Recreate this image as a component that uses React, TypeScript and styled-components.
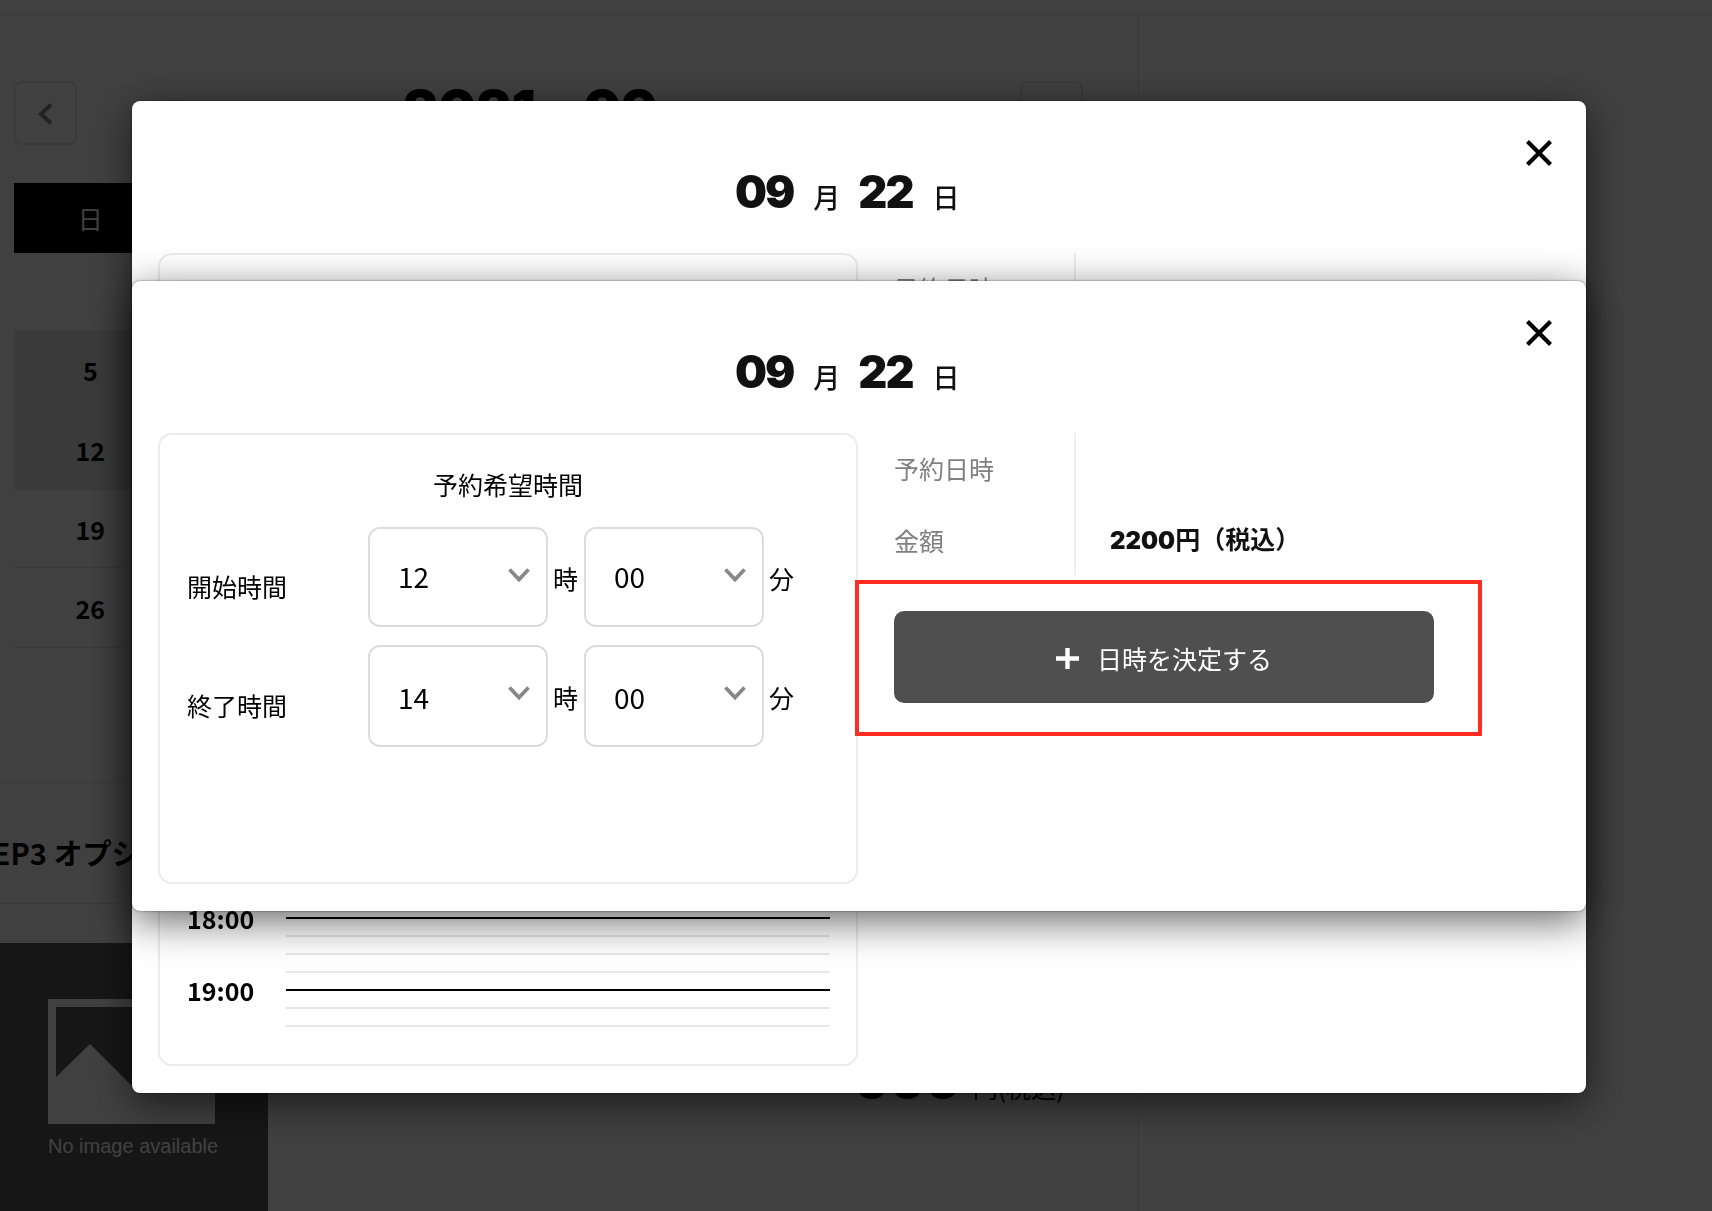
import styled, { createGlobalStyle } from "styled-components";

const JP = `"Noto Sans CJK JP", "Noto Sans", sans-serif`;
const HEAVY = `Inter, "Noto Sans CJK JP", sans-serif`;

const HOURS = [10, 11, 12, 13, 14, 15, 16, 17, 18, 19];
const WEEK_ROWS = [
  { day: 5, shaded: true, height: 80 },
  { day: 12, shaded: true, height: 80 },
  { day: 19, shaded: false, height: 78 },
  { day: 26, shaded: false, height: 80 },
];

export default function App() {
  return (
    <>
      <GlobalStyle />
      <Page>
        <TopBar />
        <Main>
          <MonthNav>
            <NavButton>
              <svg width="16" height="22" viewBox="0 0 16 22" fill="none" stroke="#888" strokeWidth="4">
                <polyline points="13,1.5 3,11 13,20.5" />
              </svg>
            </NavButton>
            <MonthTitle>2021 - 09</MonthTitle>
            <NavButton />
          </MonthNav>

          <WeekHeader>
            <WeekHeaderCell>日</WeekHeaderCell>
          </WeekHeader>

          <Calendar>
            {WEEK_ROWS.map((row) => (
              <WeekRow key={row.day} $height={row.height}>
                <DayCell $shaded={row.shaded}>{row.day}</DayCell>
              </WeekRow>
            ))}
          </Calendar>

          <StepRow>STEP3 オプション</StepRow>

          <PlanRow>
            <PlanThumb>
              <svg width="167" height="125" viewBox="0 0 167 125">
                <path
                  fill="#fff"
                  fillRule="evenodd"
                  d="M0 0H167V125H0ZM8 8V78L42 45L92 95L159 60V8Z"
                />
              </svg>
              <NoImage>No image available</NoImage>
            </PlanThumb>
            <PlanPrice>
              <b>000</b>円(税込)
            </PlanPrice>
          </PlanRow>
        </Main>
      </Page>

      <Overlay>
        <Modal $top={101} $height={992}>
          <CloseIcon />
          <DateTitle />
          <ModalBody>
            <Card $height={813}>
              <Timeline>
                {HOURS.map((hour) => (
                  <HourBlock key={hour}>
                    <HourLabel>{hour}:00</HourLabel>
                    <HourLines>
                      <HourLine $strong />
                      <HourLine />
                      <HourLine />
                      {hour !== 19 && <HourLine />}
                    </HourLines>
                  </HourBlock>
                ))}
              </Timeline>
            </Card>
            <SideColumn>
              <Summary />
            </SideColumn>
          </ModalBody>
        </Modal>

        <Modal $top={281} $height={630}>
          <CloseIcon />
          <DateTitle />
          <ModalBody>
            <Card $height={451}>
              <CardTitle>予約希望時間</CardTitle>
              <TimeRow label="開始時間" hour="12" minute="00" />
              <TimeRow label="終了時間" hour="14" minute="00" tall />
            </Card>
            <SideColumn>
              <Summary />
              <ButtonWrap>
                <ConfirmButton>
                  <PlusIcon width="23" height="21" viewBox="0 0 23 21" fill="none" stroke="#fff" strokeWidth="4.4">
                    <path d="M11.5 0V21M0 10.5H23" />
                  </PlusIcon>
                  日時を決定する
                </ConfirmButton>
                <Highlight />
              </ButtonWrap>
            </SideColumn>
          </ModalBody>
        </Modal>
      </Overlay>
    </>
  );
}

function CloseIcon() {
  return (
    <CloseButton>
      <svg width="26" height="26" viewBox="0 0 26 26" fill="none" stroke="#000" strokeWidth="4.2">
        <path d="M1.5 1.5L24.5 24.5M24.5 1.5L1.5 24.5" />
      </svg>
    </CloseButton>
  );
}

function DateTitle() {
  return (
    <DateRow>
      <DateNumber>09</DateNumber>
      <DateUnit>月</DateUnit>
      <DateNumber>22</DateNumber>
      <DateUnit>日</DateUnit>
    </DateRow>
  );
}

function Summary() {
  return (
    <SummaryGrid>
      <SummaryLabel>予約日時</SummaryLabel>
      <SummaryValue />
      <SummaryLabel>金額</SummaryLabel>
      <SummaryValue>
        <PriceNumber>2200</PriceNumber>円（税込）
      </SummaryValue>
    </SummaryGrid>
  );
}

function TimeRow({
  label,
  hour,
  minute,
  tall = false,
}: {
  label: string;
  hour: string;
  minute: string;
  tall?: boolean;
}) {
  return (
    <TimeRowWrap>
      <TimeLabel $tall={tall}>{label}</TimeLabel>
      <SelectBox $tall={tall}>
        {hour}
        <Chevron />
      </SelectBox>
      <TimeUnit $tall={tall}>時</TimeUnit>
      <SelectBox $tall={tall}>
        {minute}
        <Chevron />
      </SelectBox>
      <TimeUnit $tall={tall}>分</TimeUnit>
    </TimeRowWrap>
  );
}

function Chevron() {
  return (
    <ChevronIcon width="22" height="14" viewBox="0 0 22 14" fill="none" stroke="#888" strokeWidth="3.8">
      <polyline points="1.5,1.5 11,11.5 20.5,1.5" />
    </ChevronIcon>
  );
}

const GlobalStyle = createGlobalStyle`
  html, body {
    margin: 0;
    padding: 0;
    height: 1211px;
    overflow: hidden;
    background: #fff;
    font-family: ${JP};
    color: #000;
  }
  * {
    box-sizing: border-box;
  }
`;

const Page = styled.div`
  width: 1712px;
  height: 1211px;
  overflow: hidden;
`;

const TopBar = styled.div`
  height: 15px;
  border-bottom: 1px solid #e6e6e6;
`;

const Main = styled.div`
  width: 1139px;
  height: 1196px;
  border-right: 1px solid #e6e6e6;
`;

const MonthNav = styled.div`
  display: flex;
  justify-content: space-between;
  align-items: flex-start;
  padding: 66px 55px 0 14px;
  height: 129px;
`;

const NavButton = styled.div`
  display: flex;
  align-items: center;
  justify-content: center;
  width: 63px;
  height: 64px;
  padding-top: 2px;
  border: 2px solid #e6e6e6;
  border-radius: 8px;
`;

const MonthTitle = styled.div`
  font-family: ${HEAVY};
  font-size: 54px;
  font-weight: 900;
  line-height: 1;
  margin: 2px 36px 0 0;
  white-space: nowrap;
`;

const WeekHeader = styled.div`
  display: grid;
  grid-template-columns: repeat(7, 1fr);
  height: 70px;
  margin: 39px 56px 0 14px;
  background: #000;
`;

const WeekHeaderCell = styled.div`
  display: flex;
  align-items: center;
  justify-content: center;
  font-size: 25px;
  color: #fff;
`;

const Calendar = styled.div`
  margin: 77px 56px 0 14px;
`;

const WeekRow = styled.div<{ $height: number }>`
  display: grid;
  grid-template-columns: repeat(7, 1fr);
  height: ${(p) => p.$height}px;
  border-bottom: 1px solid #e6e6e6;
`;

const DayCell = styled.div<{ $shaded: boolean }>`
  display: flex;
  align-items: center;
  justify-content: center;
  font-size: 25px;
  font-weight: 700;
  background: ${(p) => (p.$shaded ? "#e8e8e8" : "transparent")};
`;

const StepRow = styled.div`
  display: flex;
  align-items: center;
  height: 122px;
  margin-top: 134px;
  padding-top: 18px;
  text-indent: -43px;
  border-top: 1px solid #e6e6e6;
  border-bottom: 1px solid #e6e6e6;
  font-size: 29px;
  font-weight: 700;
  white-space: nowrap;
  overflow: hidden;
`;

const PlanRow = styled.div`
  display: flex;
  margin-top: 39px;
  height: 268px;
`;

const PlanThumb = styled.div`
  flex: none;
  width: 268px;
  padding: 56px 0 0 48px;
  background: #585858;
  svg {
    display: block;
  }
`;

const NoImage = styled.div`
  margin-top: 10px;
  font-family: "Liberation Sans", Arial, sans-serif;
  font-size: 20px;
  line-height: 24px;
  color: #fff;
  white-space: nowrap;
`;

const PlanPrice = styled.div`
  margin: 117px 0 0 586px;
  font-size: 25px;
  line-height: 40px;
  white-space: nowrap;
  b {
    margin-right: 12px;
    font-family: ${HEAVY};
    font-size: 50px;
    font-weight: 900;
    line-height: 40px;
  }
`;

const Overlay = styled.div`
  position: fixed;
  inset: 0;
  background: rgba(0, 0, 0, 0.75);
`;

const Modal = styled.div<{ $top: number; $height: number }>`
  position: absolute;
  left: 132px;
  top: ${(p) => p.$top}px;
  width: 1454px;
  height: ${(p) => p.$height}px;
  overflow: hidden;
  background: #fff;
  border-radius: 8px;
  box-shadow: 0 10px 40px rgba(0, 0, 0, 0.6), 0 0 2px rgba(0, 0, 0, 0.6);
`;

const CloseButton = styled.div`
  position: absolute;
  top: 39px;
  right: 34px;
  line-height: 0;
`;

const DateRow = styled.div`
  display: flex;
  align-items: baseline;
  height: 152px;
  padding: 66px 0 0 603px;
  color: #111;
`;

const DateNumber = styled.span`
  font-family: ${HEAVY};
  font-size: 45px;
  font-weight: 900;
  line-height: 50px;
  letter-spacing: -2px;
`;

const DateUnit = styled.span`
  margin: 0 18px 0 20px;
  font-size: 27px;
  font-weight: 500;
  line-height: 50px;
`;

const ModalBody = styled.div`
  display: flex;
  align-items: flex-start;
  padding-left: 26px;
`;

const Card = styled.div<{ $height: number }>`
  flex: none;
  width: 700px;
  height: ${(p) => p.$height}px;
  overflow: hidden;
  border: 2px solid #ececec;
  border-radius: 14px;
`;

const CardTitle = styled.div`
  margin-top: 29px;
  height: 40px;
  text-align: center;
  font-size: 25px;
  line-height: 40px;
`;

const TimeRowWrap = styled.div`
  display: flex;
  align-items: flex-start;
  margin-top: 23px;
  padding-left: 27px;
  & + & {
    margin-top: 18px;
  }
`;

const TimeLabel = styled.div<{ $tall: boolean }>`
  width: 181px;
  padding-top: ${(p) => (p.$tall ? 40 : 39)}px;
  font-size: 25px;
  line-height: 40px;
`;

const SelectBox = styled.div<{ $tall: boolean }>`
  position: relative;
  width: 180px;
  height: ${(p) => (p.$tall ? 102 : 100)}px;
  padding: ${(p) => (p.$tall ? 30 : 27)}px 0 0 28px;
  border: 2px solid #dcdcdc;
  border-radius: 12px;
  font-size: 28px;
  line-height: 40px;
`;

const ChevronIcon = styled.svg`
  position: absolute;
  top: 39px;
  right: 16px;
`;

const TimeUnit = styled.div<{ $tall: boolean }>`
  width: 36px;
  padding: ${(p) => (p.$tall ? 32 : 31)}px 0 0 5px;
  font-size: 25px;
  line-height: 40px;
`;

const Timeline = styled.div`
  padding: 86px 26px 0 27px;
`;

const HourBlock = styled.div`
  display: flex;
  align-items: flex-start;
  height: 72px;
`;

const HourLabel = styled.div`
  width: 99px;
  margin-top: -19px;
  font-size: 25px;
  font-weight: 700;
  line-height: 40px;
`;

const HourLines = styled.div`
  flex: 1;
`;

const HourLine = styled.div<{ $strong?: boolean }>`
  height: 2px;
  margin-bottom: 16px;
  background: ${(p) => (p.$strong ? "#000" : "#e8e8e8")};
`;

const SideColumn = styled.div`
  flex: none;
  width: 540px;
  margin-left: 36px;
`;

const SummaryGrid = styled.div`
  display: grid;
  grid-template-columns: 182px 1fr;
  grid-template-rows: 72px 70px;
`;

const SummaryLabel = styled.div`
  padding-top: 15px;
  border-right: 2px solid #eee;
  color: #808080;
  font-size: 25px;
  line-height: 40px;
`;

const SummaryValue = styled.div`
  padding: 13px 0 0 34px;
  font-size: 25px;
  font-weight: 700;
  line-height: 40px;
  color: #111;
  white-space: nowrap;
`;

const PriceNumber = styled.span`
  font-family: ${HEAVY};
  font-size: 24px;
  font-weight: 900;
`;

const ButtonWrap = styled.div`
  position: relative;
  margin-top: 36px;
`;

const ConfirmButton = styled.div`
  display: flex;
  align-items: center;
  justify-content: center;
  gap: 18px;
  height: 92px;
  padding-top: 2px;
  border-radius: 10px;
  background: #4f4f4f;
  color: #fff;
  font-size: 25px;
`;

const PlusIcon = styled.svg`
  margin-top: 1px;
`;

const Highlight = styled.div`
  position: absolute;
  inset: -31px -48px -33px -39px;
  border: 4px solid #ff2d20;
`;
